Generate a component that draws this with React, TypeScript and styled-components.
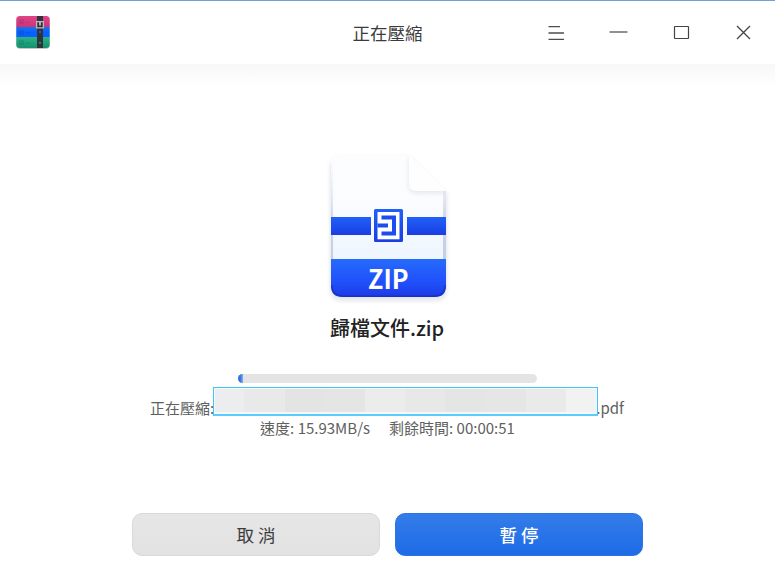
import React from "react";
import styled, { createGlobalStyle } from "styled-components";

const GlobalStyle = createGlobalStyle`
  * { box-sizing: border-box; }
  body {
    margin: 0;
    background: #fff;
    font-family: "Noto Sans CJK TC", "Noto Sans", sans-serif;
  }
`;

const Window = styled.div`
  width: 775px;
  height: 581px;
  display: flex;
  flex-direction: column;
  overflow: hidden;
  background: #fff;
`;

const TitleBar = styled.header`
  height: 64px;
  flex: none;
  display: grid;
  grid-template-columns: 1fr auto 1fr;
  align-items: center;
  border-top: 1px solid #6fa3d8;
  padding: 0 14px;
`;

const Title = styled.h1`
  margin: 0;
  padding-top: 1px;
  font-size: 17.5px;
  line-height: 26px;
  font-weight: 400;
  color: #3c3c3c;
`;

const Controls = styled.div`
  display: flex;
  justify-content: flex-end;
  gap: 46.5px;
  padding-right: 9px;
`;

const ControlButton = styled.button`
  width: 16px;
  height: 18px;
  padding: 0;
  border: 0;
  background: none;
  display: flex;
  svg { overflow: visible; }
`;

const Content = styled.main`
  flex: 1;
  display: flex;
  flex-direction: column;
  align-items: center;
  padding-top: 83px;
  background: linear-gradient(#f7f7f7, #fff 22px);
`;

const FileName = styled.h2`
  margin: 6px 1px 1px 0;
  height: 30px;
  font-size: 20px;
  line-height: 30px;
  font-weight: 500;
  color: #222;
`;

const ProgressTrack = styled.div`
  width: 299px;
  height: 9px;
  margin-top: 30px;
  border-radius: 5px;
  overflow: hidden;
  background: #e4e4e4;
`;

const ProgressFill = styled.div`
  height: 100%;
  background: linear-gradient(90deg, #2f72e4 45%, #8bb0ef);
`;

const CurrentFile = styled.div`
  position: relative;
  width: 474px;
  height: 20px;
  margin: 15px 1px 0 0;
  display: flex;
  justify-content: space-between;
  font-size: 15px;
  line-height: 20px;
  color: #606060;
`;

const Redaction = styled.div`
  position: absolute;
  left: 63px;
  top: -11px;
  width: 385px;
  height: 29px;
  display: flex;
  border: 1px solid #3fc4fb;
  border-bottom: 2px solid #5acdfa;
  background: #f4f8fa;
  padding: 1px 1px 2px;
`;

const MaskBlock = styled.span<{ $width: number; $color: string }>`
  flex: ${(p) => p.$width} 1 0;
  background: ${(p) => p.$color};
`;

const Stats = styled.div`
  display: flex;
  gap: 19px;
  font-size: 15px;
  line-height: 20px;
  color: #606060;
`;

const Actions = styled.div`
  display: flex;
  gap: 15px;
  margin-top: 75px;
`;

const ActionButton = styled.button<{ $primary?: boolean }>`
  width: 248px;
  height: 43px;
  padding: 1px 0 0;
  border: 1px solid ${(p) => (p.$primary ? "#2d73e5" : "#d9d9d9")};
  border-radius: 10px;
  background: ${(p) => (p.$primary ? "linear-gradient(#347ce9, #1d6be6)" : "linear-gradient(#e6e6e6, #e2e2e2)")};
  color: ${(p) => (p.$primary ? "#fff" : "#3c3c3c")};
  font-family: inherit;
  font-size: 17.5px;
  font-weight: ${(p) => (p.$primary ? 500 : 400)};
  line-height: 26px;
`;

const maskBlocks = [
  { width: 29, color: "#ecedef" },
  { width: 41, color: "#e9e9e9" },
  { width: 40, color: "#e4e4e4" },
  { width: 41, color: "#e5e5e5" },
  { width: 40, color: "#ececec" },
  { width: 40, color: "#e8e8e8" },
  { width: 41, color: "#e4e6e6" },
  { width: 41, color: "#e6e6e6" },
  { width: 40, color: "#eaeaea" },
  { width: 30, color: "#f2f2f2" },
];

function AppLogo() {
  return (
    <svg width="38" height="38" viewBox="14 14 38 38">
      <defs>
        <clipPath id="logoClip"><rect x="16.3" y="16" width="33.4" height="32" rx="3.5" /></clipPath>
        <linearGradient id="logoPink" x2="0" y2="1"><stop stopColor="#df4487" /><stop offset="1" stopColor="#cf3479" /></linearGradient>
        <linearGradient id="logoBlue" x2="0" y2="1"><stop stopColor="#1972e9" /><stop offset=".5" stopColor="#0861ff" /></linearGradient>
        <linearGradient id="logoGreen" x2="0" y2="1"><stop stopColor="#2bb286" /><stop offset="1" stopColor="#12926e" /></linearGradient>
      </defs>
      <rect x="16.3" y="17" width="33.4" height="32" rx="4" fill="#000" opacity=".22" />
      <g clipPath="url(#logoClip)">
        <path fill="url(#logoPink)" d="M16 16h34v11H16z" />
        <path fill="url(#logoBlue)" d="M16 27h34v10H16z" />
        <path fill="url(#logoGreen)" d="M16 37h34v11H16z" />
        <path fill="#202050" opacity=".13" d="M19 19h5v5h-5zM25 21.5h4v1.5h-4zM19 30h5v5h-5zM25 32h5v1.5h-5zM19 40h5v5h-5zM25 42.5h5v1.2h-5z" />
        <path fill="#30333a" d="M37 16h6v32h-6z" />
      </g>
      <path fill="none" stroke="#b8b8b8" strokeWidth="1.3" d="M36.6 21.7h6.8v6.1h-6.8z" />
      <path stroke="#eee" strokeWidth="1.3" d="M40 22v3.5" />
      <path fill="#1467ac" d="M39 31h2v2h-2z" />
      <path fill="#15a27b" d="M39 42h2v1.5h-2z" />
    </svg>
  );
}

function ArchiveIcon() {
  return (
    <svg width="135" height="160" viewBox="320 147 135 160">
      <defs>
        <linearGradient id="paper" x2="0" y2="1"><stop stopColor="#fdfdfe" /><stop offset=".35" stopColor="#fafcff" /><stop offset=".75" stopColor="#edf5ff" /></linearGradient>
        <linearGradient id="band" x2="0" y2="1"><stop stopColor="#2060f8" /><stop offset="1" stopColor="#1b3ee2" /></linearGradient>
        <linearGradient id="label" x2="0" y2="1"><stop stopColor="#266bfd" /><stop offset=".6" stopColor="#2150fa" /><stop offset="1" stopColor="#1c3ae6" /></linearGradient>
        <linearGradient id="edge" x2="0" y2="1"><stop stopColor="#e9edf6" stopOpacity=".2" /><stop offset=".6" stopColor="#cbd4e7" /><stop offset="1" stopColor="#c4cee3" /></linearGradient>
        <clipPath id="document"><path d="M342 155h67l37 36v95q0 11-11 11h-93q-11 0-11-11V166q0-11 11-11z" /></clipPath>
        <filter id="documentShadow" x="-20%" y="-20%" width="140%" height="140%"><feDropShadow dx="0" dy="3" stdDeviation="2.5" floodColor="#263452" floodOpacity=".15" /></filter>
        <filter id="foldShadow" x="-20%" y="-20%" width="140%" height="140%"><feDropShadow dx="0" dy="2" stdDeviation="2" floodColor="#36415a" floodOpacity=".12" /></filter>
      </defs>
      <path filter="url(#documentShadow)" fill="#fcfdff" d="M342 155h67l37 36v95q0 11-11 11h-93q-11 0-11-11V166q0-11 11-11z" />
      <g clipPath="url(#document)">
        <path fill="url(#paper)" d="M331 155h115v142H331z" />
        <path fill="url(#edge)" d="M331 163h2v96h-2zM443 191h3v68h-3z" />
        <path fill="url(#band)" d="M331 217h40v18h-40zM407 217h39v18h-39z" />
        <path fill="url(#label)" d="M331 259h115v38H331z" />
        <path fill="none" stroke="#162eb6" strokeWidth="1.5" opacity=".75" d="M331.5 285q1 11 12 11.2h90q11 0 12-11.2" />
        <path filter="url(#foldShadow)" fill="#fefefe" d="M409 155v28q0 8 8 8h29z" />
      </g>
      <rect x="374" y="209" width="29" height="33" rx="1.5" fill="url(#band)" />
      <path fill="#fff" d="M377.5 212h22v27.3h-22z" />
      <path fill="#1f4ded" d="M381.5 215.5h14.5v20h-14.5v-4h10.5v-12h-10.5z" />
      <path fill="#1f4ded" d="M377.5 223.5h10.5v4h-10.5z" />
      <text x="368" y="289" fill="#fff" fontFamily="Noto Sans CJK TC, sans-serif" fontSize="26.2" fontWeight="700" textLength="40.5" lengthAdjust="spacingAndGlyphs">ZIP</text>
    </svg>
  );
}

export default function App() {
  return (
    <>
      <GlobalStyle />
      <Window>
        <TitleBar>
          <AppLogo />
          <Title>正在壓縮</Title>
          <Controls>
            <ControlButton aria-label="選單">
              <svg width="16" height="18" fill="none" stroke="#4d4d4d" strokeWidth="1.3"><path d="M-.5 2.7h11.5M-.5 9h15.5M-.5 15.4h15.5" /></svg>
            </ControlButton>
            <ControlButton aria-label="最小化">
              <svg width="16" height="18" fill="none" stroke="#555" strokeWidth="1.3"><path d="M-1.5 8h18" /></svg>
            </ControlButton>
            <ControlButton aria-label="最大化">
              <svg width="16" height="18" fill="none" stroke="#444" strokeWidth="1.2"><rect x=".5" y="2.5" width="14" height="12" rx=".5" /></svg>
            </ControlButton>
            <ControlButton aria-label="關閉">
              <svg width="16" height="18" fill="none" stroke="#444" strokeWidth="1.3"><path d="m1 2 13 13M14 2 1 15" /></svg>
            </ControlButton>
          </Controls>
        </TitleBar>
        <Content>
          <ArchiveIcon />
          <FileName>歸檔文件.zip</FileName>
          <ProgressTrack><ProgressFill style={{ width: "1.7%" }} /></ProgressTrack>
          <CurrentFile>
            <span>正在壓縮:</span>
            <span>.pdf</span>
            <Redaction>
              {maskBlocks.map((block, index) => <MaskBlock key={index} $width={block.width} $color={block.color} />)}
            </Redaction>
          </CurrentFile>
          <Stats><span>速度: 15.93MB/s</span><span>剩餘時間: 00:00:51</span></Stats>
          <Actions>
            <ActionButton>取 消</ActionButton>
            <ActionButton $primary>暫 停</ActionButton>
          </Actions>
        </Content>
      </Window>
    </>
  );
}
